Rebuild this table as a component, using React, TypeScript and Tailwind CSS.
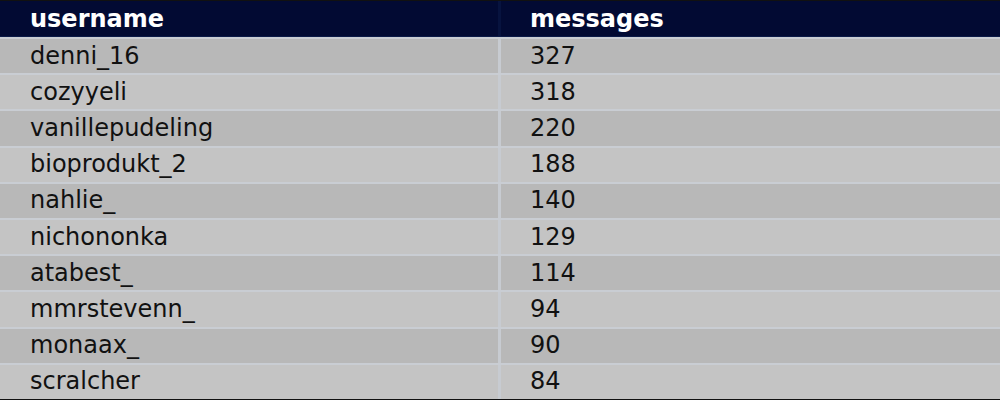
import React from "react";

const rows: [string, string][] = [
  ["denni_16", "327"],
  ["cozyyeli", "318"],
  ["vanillepudeling", "220"],
  ["bioprodukt_2", "188"],
  ["nahlie_", "140"],
  ["nichononka", "129"],
  ["atabest_", "114"],
  ["mmrstevenn_", "94"],
  ["monaax_", "90"],
  ["scralcher", "84"],
];

export default function App() {
  return (
    <div
      className="w-[1000px] h-[400px] overflow-hidden flex flex-col bg-[#c4c4c4] text-[24px] leading-none text-[#111]"
      style={{ fontFamily: '"DejaVu Sans", Verdana, sans-serif' }}
    >
      <div className="h-[1px] bg-[#111] shrink-0" />
      <div className="flex h-[36px] shrink-0 bg-[#020a33] border-b border-[#0b1a48] text-white font-bold">
        <div className="w-[501px] border-r-[3px] border-[#07133f] pl-[30px] flex items-center">username</div>
        <div className="flex-1 pl-[29px] flex items-center">messages</div>
      </div>
      {rows.map(([u, m], i) => (
        <div
          key={u}
          className={`flex h-[36.2px] shrink-0 border-t-2 border-[#c9cdd3] ${i % 2 === 0 ? "bg-[#b8b8b8]" : "bg-[#c4c4c4]"}`}
        >
          <div className="w-[501px] border-r-[3px] border-[#c7cbd1] pl-[30px] pb-[1px] flex items-center">{u}</div>
          <div className="flex-1 pl-[29px] pb-[1px] flex items-center">{m}</div>
        </div>
      ))}
      <div className="flex-1" />
      <div className="h-[1px] bg-[#111] shrink-0" />
    </div>
  );
}
